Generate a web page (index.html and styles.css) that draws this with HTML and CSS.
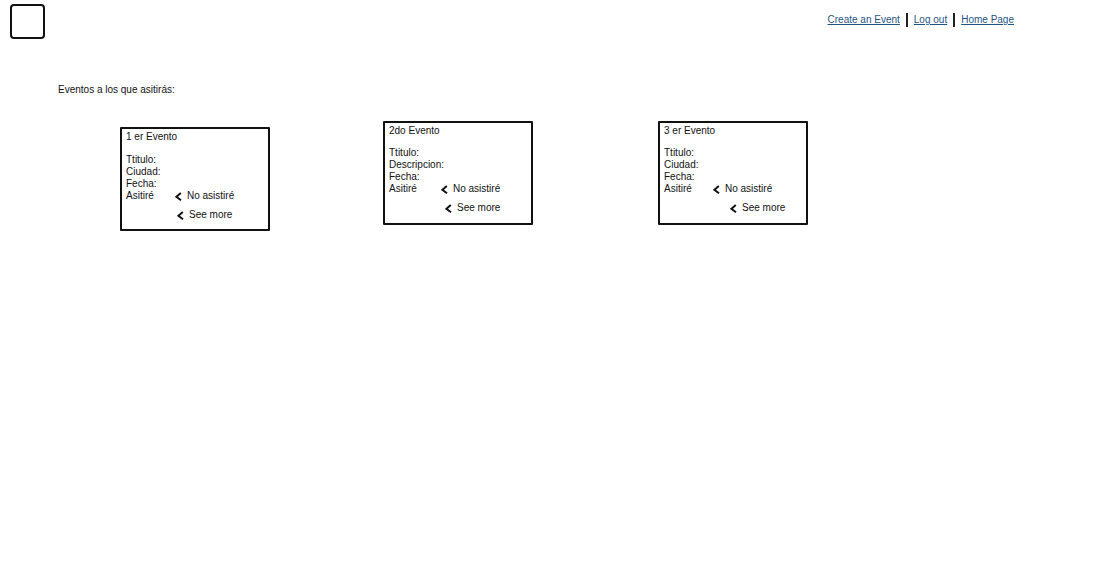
FILE: index.html
```html
<!DOCTYPE html>
<html lang="es">
<head>
<meta charset="utf-8">
<meta name="viewport" content="width=device-width, initial-scale=1">
<title>Eventos</title>
<link rel="stylesheet" href="styles.css">
</head>
<body>
<svg class="symbols" aria-hidden="true">
  <symbol id="chevron" viewBox="0 0 7 9"><path d="M5.8 1 L1.4 4.8 L6 8.2"/></symbol>
</svg>
<header class="header">
  <div class="logo"></div>
  <nav class="nav">
    <a href="#create">Create an Event</a>
    <a href="#logout">Log out</a>
    <a href="#home">Home Page</a>
  </nav>
</header>
<main class="main">
  <h1 class="heading">Eventos a los que asitirás:</h1>
  <div class="events">
    <article class="card card-lowered">
      <h2 class="card-title">1 er Evento</h2>
      <p>Ttitulo:</p>
      <p>Ciudad:</p>
      <p>Fecha:</p>
      <div class="attendance">
        <p>Asitiré</p>
        <button class="action" type="button"><svg class="chevron" aria-hidden="true"><use href="#chevron"/></svg>No asistiré</button>
      </div>
      <button class="action more more-near" type="button"><svg class="chevron" aria-hidden="true"><use href="#chevron"/></svg>See more</button>
    </article>
    <article class="card">
      <h2 class="card-title">2do Evento</h2>
      <p>Ttitulo:</p>
      <p>Descripcion:</p>
      <p>Fecha:</p>
      <div class="attendance attendance-wide">
        <p>Asitiré</p>
        <button class="action" type="button"><svg class="chevron" aria-hidden="true"><use href="#chevron"/></svg>No asistiré</button>
      </div>
      <button class="action more" type="button"><svg class="chevron" aria-hidden="true"><use href="#chevron"/></svg>See more</button>
    </article>
    <article class="card">
      <h2 class="card-title">3 er Evento</h2>
      <p>Ttitulo:</p>
      <p>Ciudad:</p>
      <p>Fecha:</p>
      <div class="attendance">
        <p>Asitiré</p>
        <button class="action" type="button"><svg class="chevron" aria-hidden="true"><use href="#chevron"/></svg>No asistiré</button>
      </div>
      <button class="action more more-far" type="button"><svg class="chevron" aria-hidden="true"><use href="#chevron"/></svg>See more</button>
    </article>
  </div>
</main>
</body>
</html>
```
FILE: styles.css
```css
* {
  box-sizing: border-box;
}

body {
  margin: 0;
  background: #fff;
  color: #111;
  font: 10px/12px "Liberation Sans", Arial, sans-serif;
}

h1,
h2,
p {
  margin: 0;
  font-size: inherit;
  font-weight: normal;
}

.symbols {
  display: block;
  width: 0;
  height: 0;
}

.header {
  display: flex;
  justify-content: space-between;
  align-items: flex-start;
  padding: 4px 94px 0 10px;
}

.logo {
  width: 35px;
  height: 35px;
  border: 2px solid #111;
  border-radius: 4px;
}

.nav {
  display: flex;
  padding-top: 10px;
}

.nav a {
  position: relative;
  color: #1f5584;
  text-decoration: underline;
}

.nav a + a {
  margin-left: 14px;
}

.nav a + a::before {
  content: "";
  position: absolute;
  left: -8px;
  top: -1px;
  width: 2px;
  height: 14px;
  background: #222;
}

.main {
  padding-top: 45px;
}

.heading {
  padding-left: 58px;
}

.events {
  display: grid;
  grid-template-columns: 263fr 275fr 450fr;
  align-items: start;
  margin-top: 25px;
  padding-left: 120px;
}

.card {
  width: 150px;
  padding: 2px 4px 9px;
  border: 2px solid #111;
  border-radius: 1px;
}

.card-lowered {
  margin-top: 6px;
  padding-bottom: 8px;
}

.card-title {
  margin-bottom: 10px;
}

.card-lowered .card-title {
  margin-bottom: 11px;
}

.attendance {
  display: grid;
  grid-template-columns: 49px auto;
}

.attendance-wide {
  grid-template-columns: 52px auto;
}

.action {
  display: flex;
  align-items: center;
  justify-self: start;
  gap: 5px;
  padding: 0;
  border: 0;
  background: none;
  color: inherit;
  font: inherit;
  white-space: nowrap;
  cursor: pointer;
}

.more {
  margin-top: 7px;
  margin-left: 56px;
}

.more-near {
  margin-left: 51px;
}

.more-far {
  margin-left: 66px;
}

.chevron {
  width: 7px;
  height: 9px;
  fill: none;
  stroke: #111;
  stroke-width: 2;
}
```
